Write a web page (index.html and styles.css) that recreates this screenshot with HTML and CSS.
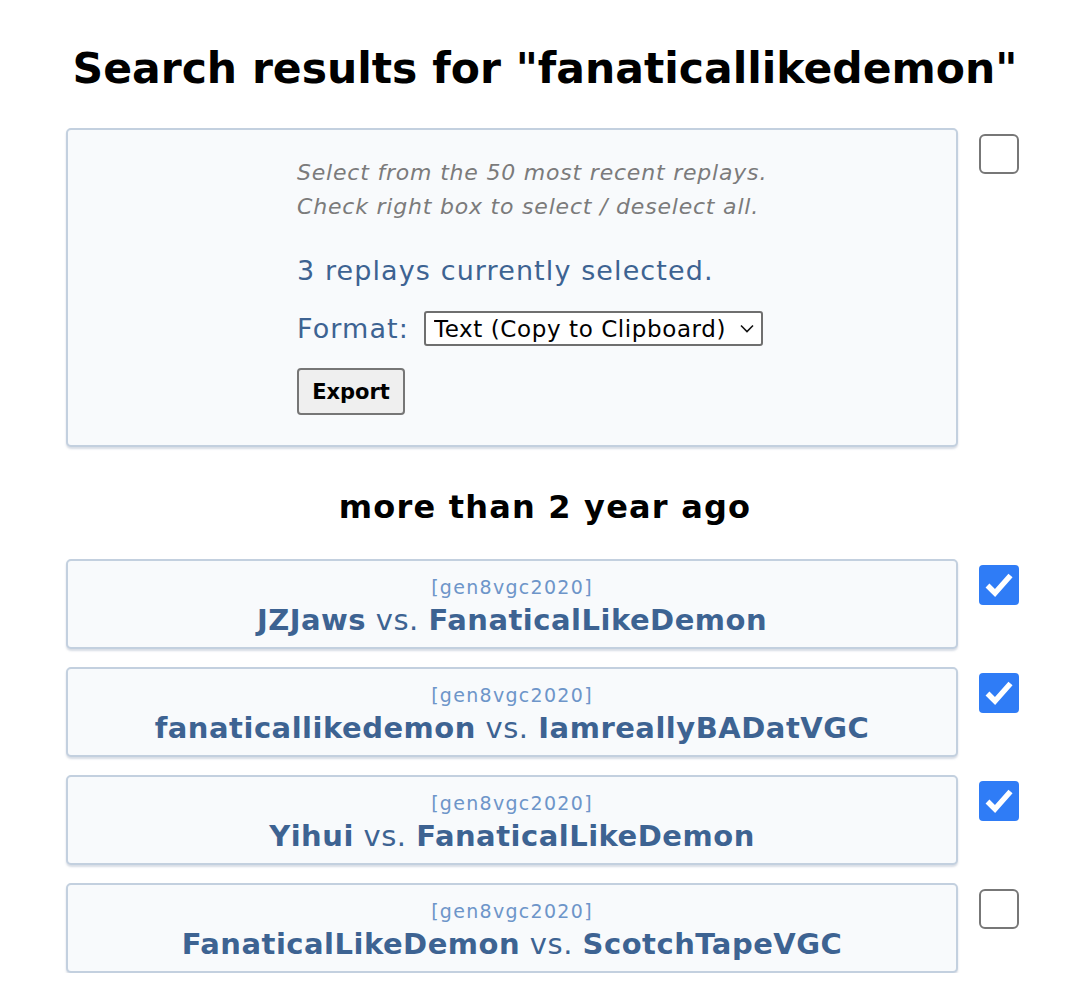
FILE: index.html
```html
<!DOCTYPE html>
<html>
<head>
<meta charset="utf-8">
<link rel="stylesheet" href="styles.css">
</head>
<body>
<main class="page">
  <h1 class="title">Search results for "fanaticallikedemon"</h1>

  <div class="line">
    <section class="panel">
      <p class="hint">Select from the 50 most recent replays.<br>Check right box to select / deselect all.</p>
      <p class="count">3 replays currently selected.</p>
      <div class="format">
        <label class="format-label">Format:</label>
        <span class="select-wrap">
          <select class="select"><option>Text (Copy to Clipboard)</option></select>
          <svg class="chev" width="14" height="9" viewBox="0 0 14 9"><path d="M1 1.5 L7 7.5 L13 1.5" fill="none" stroke="#111" stroke-width="1.6"/></svg>
        </span>
      </div>
      <button class="export">Export</button>
    </section>
    <span class="box"></span>
  </div>

  <h2 class="group">more than 2 year ago</h2>

  <div class="list">
    <div class="line">
      <a class="replay"><span class="fmt">[gen8vgc2020]</span><span class="players"><b>JZJaws</b> vs. <b>FanaticalLikeDemon</b></span></a>
      <span class="box on"><svg width="40" height="40" viewBox="0 0 40 40"><path d="M8.5 20.5 L16 28 L31.5 10.5" fill="none" stroke="#fff" stroke-width="5.5"/></svg></span>
    </div>
    <div class="line">
      <a class="replay"><span class="fmt">[gen8vgc2020]</span><span class="players"><b>fanaticallikedemon</b> vs. <b>IamreallyBADatVGC</b></span></a>
      <span class="box on"><svg width="40" height="40" viewBox="0 0 40 40"><path d="M8.5 20.5 L16 28 L31.5 10.5" fill="none" stroke="#fff" stroke-width="5.5"/></svg></span>
    </div>
    <div class="line">
      <a class="replay"><span class="fmt">[gen8vgc2020]</span><span class="players"><b>Yihui</b> vs. <b>FanaticalLikeDemon</b></span></a>
      <span class="box on"><svg width="40" height="40" viewBox="0 0 40 40"><path d="M8.5 20.5 L16 28 L31.5 10.5" fill="none" stroke="#fff" stroke-width="5.5"/></svg></span>
    </div>
    <div class="line">
      <a class="replay"><span class="fmt">[gen8vgc2020]</span><span class="players"><b>FanaticalLikeDemon</b> vs. <b>ScotchTapeVGC</b></span></a>
      <span class="box"></span>
    </div>
  </div>
</main>
</body>
</html>
```

FILE: styles.css
```css
html, body {
  margin: 0;
  padding: 0;
  background: #fff;
}
body {
  font-family: "DejaVu Sans", Verdana, sans-serif;
  color: #000;
}
.page {
  width: 958px;
  margin-left: 66px;
  padding-top: 41px;
}
.title {
  margin: 0 0 31px;
  text-align: center;
  font-size: 42.5px;
  font-weight: bold;
  line-height: 56px;
  white-space: nowrap;
}
.line {
  display: flex;
  align-items: flex-start;
  gap: 21px;
}
.panel {
  box-sizing: border-box;
  width: 892px;
  height: 319px;
  background: #f8fafc;
  border: 2px solid #c3d0df;
  border-radius: 5px;
  box-shadow: 0 2px 2px rgba(100, 120, 150, 0.25);
  padding: 26px 0 0 229px;
}
.hint {
  margin: 0;
  font-style: italic;
  font-size: 22px;
  letter-spacing: 0.8px;
  line-height: 34px;
  color: #7b7b7b;
}
.count {
  margin: 30px 0 0;
  font-size: 27px;
  letter-spacing: 1.1px;
  line-height: 34px;
  color: #3d6392;
}
.format {
  display: flex;
  align-items: center;
  margin-top: 23px;
  gap: 15px;
}
.format-label {
  font-size: 27px;
  letter-spacing: 1.1px;
  color: #3d6392;
}
.select-wrap {
  position: relative;
  display: inline-block;
}
.select {
  appearance: none;
  -webkit-appearance: none;
  box-sizing: border-box;
  height: 35px;
  width: 339px;
  border: 2px solid #6f6f6f;
  border-radius: 3px;
  background: #fff;
  font-family: "DejaVu Sans", Verdana, sans-serif;
  font-size: 23px;
  letter-spacing: 0.6px;
  color: #000;
  padding: 0 0 0 8px;
}
.chev {
  position: absolute;
  right: 9px;
  top: 13px;
  pointer-events: none;
}
.export {
  margin-top: 22px;
  box-sizing: border-box;
  width: 108px;
  height: 47px;
  background: #efefef;
  border: 2px solid #767676;
  border-radius: 4px;
  font-family: "DejaVu Sans", Verdana, sans-serif;
  font-weight: bold;
  font-size: 21px;
  color: #000;
  padding: 0;
}
.box {
  flex: none;
  box-sizing: border-box;
  width: 40px;
  height: 40px;
  margin-top: 6px;
  border: 2px solid #777;
  border-radius: 6px;
  background: #fff;
}
.box.on {
  border: none;
  border-radius: 4px;
  background: #2f7cf6;
}
.box svg {
  display: block;
}
.group {
  margin: 40px 0 32px;
  text-align: center;
  font-size: 32px;
  letter-spacing: 1.2px;
  line-height: 40px;
  font-weight: bold;
}
.list {
  display: flex;
  flex-direction: column;
  gap: 18px;
}
.replay {
  box-sizing: border-box;
  width: 892px;
  height: 90px;
  display: flex;
  flex-direction: column;
  align-items: center;
  justify-content: flex-start;
  background: #f8fafc;
  border: 2px solid #c3d0df;
  border-radius: 5px;
  box-shadow: 0 2px 2px rgba(100, 120, 150, 0.25);
  color: #3d6392;
  text-decoration: none;
  padding-top: 14px;
}
.fmt {
  font-size: 19px;
  letter-spacing: 1.3px;
  line-height: 25px;
  color: #6d95c9;
}
.players {
  font-size: 29px;
  letter-spacing: 0.5px;
  line-height: 40px;
}
```
